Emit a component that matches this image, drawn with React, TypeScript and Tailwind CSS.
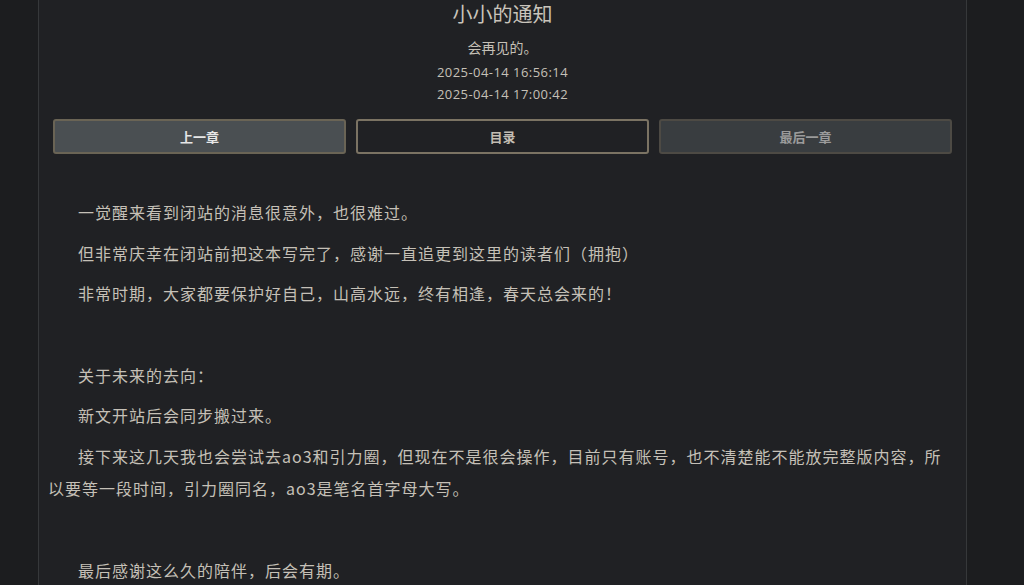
import React from 'react';

const paragraphs: string[] = [
  '一觉醒来看到闭站的消息很意外，也很难过。',
  '但非常庆幸在闭站前把这本写完了，感谢一直追更到这里的读者们（拥抱）',
  '非常时期，大家都要保护好自己，山高水远，终有相逢，春天总会来的！',
  '',
  '关于未来的去向：',
  '新文开站后会同步搬过来。',
  '接下来这几天我也会尝试去ao3和引力圈，但现在不是很会操作，目前只有账号，也不清楚能不能放完整版内容，所以要等一段时间，引力圈同名，ao3是笔名首字母大写。',
  '',
  '最后感谢这么久的陪伴，后会有期。',
];

const App: React.FC = () => {
  return (
    <div
      className="h-[585px] overflow-hidden bg-[#1c1d1f] text-[#c5c0b7]"
      style={{ fontFamily: '"Noto Sans CJK SC", "Noto Sans", sans-serif' }}
    >
      <div className="ml-[38px] w-[929px] h-full bg-[#202124] border-x border-[#36383a]">
        <div className="flex flex-col items-center">
          <h1 className="text-[20px] leading-[28px] text-[#c9c4bb]">小小的通知</h1>
          <p className="mt-[8px] text-[14px] leading-[22px]">会再见的。</p>
          <div className="mt-[3px] flex flex-col items-center text-[13px] leading-[22px] tracking-[0.45px] font-['Open_Sans','Noto_Sans',sans-serif]">
            <p>2025-04-14 16:56:14</p>
            <p>2025-04-14 17:00:42</p>
          </div>
        </div>

        <div className="mt-[14px] px-[14px] grid grid-cols-3 gap-[10px]">
          <button className="h-[35px] rounded-[3px] border-2 border-[#6a6455] bg-[#4a4f52] text-[13px] font-bold text-[#e6e6e6]">
            上一章
          </button>
          <button className="h-[35px] rounded-[3px] border-2 border-[#7b7363] bg-transparent text-[13px] font-bold text-[#c3bdb3]">
            目录
          </button>
          <button className="h-[35px] rounded-[3px] border-2 border-[#4d4a44] bg-[#393d40] text-[13px] font-bold text-[#9b9b9b]">
            最后一章
          </button>
        </div>

        <div className="pt-[42px] pl-[9px] pr-[14px]">
          {paragraphs.map((text, i) => (
            <p key={i} className="text-[16px] tracking-[1px] leading-[32px] mb-[8.7px] indent-[30px]">
              {text || '\u00a0'}
            </p>
          ))}
        </div>
      </div>
    </div>
  );
};

export default App;
